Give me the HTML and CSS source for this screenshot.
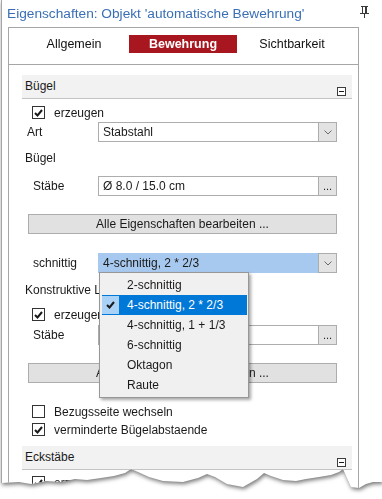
FILE: index.html
```html
<!DOCTYPE html>
<html lang="de">
<head>
<meta charset="utf-8">
<title>Eigenschaften</title>
<link rel="stylesheet" href="styles.css">
</head>
<body>
<div class="stage">
  <div class="window">
    <div class="titlebar">
      <span class="title">Eigenschaften: Objekt 'automatische Bewehrung'</span>
      <svg class="pin" width="9" height="12" viewBox="0 0 9 12">
        <path d="M1 0.5H8M2.5 0.5V7M6.5 0.5V7M0 7.5H9M4.5 8V12" stroke="#3a3a3a" stroke-width="1" fill="none"/>
        <rect x="5" y="1" width="1.5" height="6" fill="#3a3a3a"/>
      </svg>
    </div>
    <div class="panel">
      <div class="tabs">
        <span class="tab">Allgemein</span>
        <span class="tab active">Bewehrung</span>
        <span class="tab">Sichtbarkeit</span>
      </div>
      <div class="content">
        <div class="section-head"><span>Bügel</span><span class="collapse"></span></div>

        <div class="check-row r-erz1">
          <span class="cb checked"><svg width="9" height="8" viewBox="0 0 9 8"><path d="M1 4L3.5 6.5L8 1" stroke="#1a1a1a" stroke-width="2" fill="none"/></svg></span>
          <span class="cb-label">erzeugen</span>
        </div>

        <div class="field-row r-art">
          <span class="label l-art">Art</span>
          <div class="combo">
            <span class="combo-text">Stabstahl</span>
            <span class="combo-btn"><svg width="8" height="5" viewBox="0 0 8 5"><path d="M0.5 0.5L4 4L7.5 0.5" stroke="#6a6a6a" stroke-width="1" fill="none"/></svg></span>
          </div>
        </div>

        <div class="subhead r-sub1">Bügel</div>

        <div class="field-row r-staebe1">
          <span class="label l-in">Stäbe</span>
          <div class="combo">
            <span class="combo-text">Ø 8.0 / 15.0 cm</span>
            <span class="combo-btn dots">...</span>
          </div>
        </div>

        <div class="wide-btn r-btn1">Alle Eigenschaften bearbeiten ...</div>

        <div class="field-row r-schn">
          <span class="label l-in">schnittig</span>
          <div class="combo focused">
            <span class="combo-text">4-schnittig, 2 * 2/3</span>
            <span class="combo-btn"><svg width="8" height="5" viewBox="0 0 8 5"><path d="M0.5 0.5L4 4L7.5 0.5" stroke="#6a6a6a" stroke-width="1" fill="none"/></svg></span>
          </div>
        </div>

        <div class="subhead r-sub2">Konstruktive Längsstäbe</div>

        <div class="check-row r-erz2">
          <span class="cb checked"><svg width="9" height="8" viewBox="0 0 9 8"><path d="M1 4L3.5 6.5L8 1" stroke="#1a1a1a" stroke-width="2" fill="none"/></svg></span>
          <span class="cb-label">erzeugen</span>
        </div>

        <div class="field-row r-staebe2">
          <span class="label l-in">Stäbe</span>
          <div class="combo">
            <span class="combo-text"></span>
            <span class="combo-btn dots">...</span>
          </div>
        </div>

        <div class="wide-btn r-btn2">Alle Eigenschaften bearbeiten ...</div>

        <div class="check-row r-bez">
          <span class="cb"></span>
          <span class="cb-label">Bezugsseite wechseln</span>
        </div>

        <div class="check-row r-verm">
          <span class="cb checked"><svg width="9" height="8" viewBox="0 0 9 8"><path d="M1 4L3.5 6.5L8 1" stroke="#1a1a1a" stroke-width="2" fill="none"/></svg></span>
          <span class="cb-label">verminderte Bügelabstaende</span>
        </div>

        <div class="section-head r-eck"><span>Eckstäbe</span><span class="collapse"></span></div>

        <div class="check-row r-erz3">
          <span class="cb checked"><svg width="9" height="8" viewBox="0 0 9 8"><path d="M1 4L3.5 6.5L8 1" stroke="#1a1a1a" stroke-width="2" fill="none"/></svg></span>
          <span class="cb-label">erzeugen</span>
        </div>
      </div>
    </div>

    <div class="dropdown">
      <div class="item">2-schnittig</div>
      <div class="item selected"><span class="mark"><svg width="9" height="8" viewBox="0 0 9 8"><path d="M1 4L3.5 6.5L8 1" stroke="#1a1a1a" stroke-width="2" fill="none"/></svg></span>4-schnittig, 2 * 2/3</div>
      <div class="item">4-schnittig, 1 + 1/3</div>
      <div class="item">6-schnittig</div>
      <div class="item">Oktagon</div>
      <div class="item">Raute</div>
    </div>
  </div>
</div>
</body>
</html>
```

FILE: styles.css
```css
* { box-sizing: border-box; }

html, body {
  margin: 0;
  padding: 0;
  background: #ffffff;
}

body {
  font-family: "Liberation Sans", Arial, sans-serif;
  font-size: 12px;
  color: #1a1a1a;
}

.stage {
  width: 382px;
  height: 499px;
  filter: drop-shadow(1px 2px 2px rgba(0, 0, 0, 0.55));
}

.window {
  position: relative;
  width: 381px;
  height: 499px;
  background: #ffffff;
  border-left: 1px solid #a6a6a6;
  margin-left: 1px;
  overflow: hidden;
  clip-path: polygon(0 0, 381px 0, 381px 482px, 372px 482px, 365px 484px, 358px 488px, 350px 487px, 346px 478px, 342px 469px, 338px 472px, 330px 475px, 318px 477px, 305px 479px, 295px 481px, 282px 480px, 270px 476px, 263px 473px, 256px 479px, 242px 487px, 226px 484px, 214px 477px, 206px 474px, 197px 478px, 182px 482px, 162px 481px, 148px 477px, 137px 472px, 130px 469px, 124px 473px, 113px 476px, 100px 478px, 86px 480px, 74px 479px, 60px 482px, 45px 481px, 30px 484px, 18px 482px, 0 483px);
}

.titlebar {
  height: 27px;
  display: flex;
  align-items: center;
  padding: 0 0 0 5px;
}

.title {
  font-family: "Liberation Sans", Arial, sans-serif;
  font-size: 13.7px;
  color: #3a6fb5;
  margin-top: -1px;
  flex: none;
}

.pin {
  display: block;
  margin-top: -4px;
  margin-left: auto;
  margin-right: 13px;
  flex: none;
}

.panel {
  margin-left: 6px;
  width: 351px;
  height: 520px;
  border: 1px solid #a6a6a6;
  border-bottom: none;
}

.tabs {
  height: 37px;
  border-bottom: 1px solid #a6a6a6;
  display: grid;
  grid-template-columns: 108px 108px 108px;
  column-gap: 1px;
  padding: 7px 0 0 11px;
  align-items: start;
}

.tab {
  height: 18px;
  line-height: 18px;
  text-align: center;
  color: #111;
  font-size: 12.5px;
}

.tab.active {
  background: #a8171f;
  color: #ffffff;
  font-weight: bold;
}

.content {
  padding: 10px 6px 0 13px;
}

.section-head {
  height: 24px;
  background: #f2f2f2;
  border-bottom: 1px solid #c4c4c4;
  position: relative;
  padding-left: 3px;
  line-height: 23px;
  color: #1a1a1a;
}

.collapse {
  position: absolute;
  right: 6px;
  bottom: 2px;
  width: 9px;
  height: 9px;
  border: 1px solid #3c3c3c;
  background: #ffffff;
}

.collapse::after {
  content: "";
  position: absolute;
  left: 1px;
  right: 1px;
  top: 3px;
  height: 1px;
  background: #1a1a1a;
}

.check-row {
  display: flex;
  align-items: center;
  height: 13px;
  padding-left: 10px;
}

.cb {
  width: 13px;
  height: 13px;
  border: 1px solid #333333;
  background: #ffffff;
  display: flex;
  align-items: center;
  justify-content: center;
  flex: none;
}

.cb svg { display: block; }

.cb-label {
  margin-left: 9px;
  white-space: nowrap;
}

.field-row {
  display: flex;
  align-items: center;
  height: 20px;
}

.label {
  flex: none;
}

.l-art {
  width: 76px;
  padding-left: 5px;
}

.l-in {
  width: 76px;
  padding-left: 11px;
}

.combo {
  width: 239px;
  height: 20px;
  border: 1px solid #adadad;
  background: #ffffff;
  display: flex;
}

.combo.focused {
  background: #a8c9ef;
  border-color: #a8c9ef;
}

.combo-text {
  flex: 1;
  line-height: 18px;
  padding-left: 4px;
  white-space: nowrap;
  overflow: hidden;
}

.combo-btn {
  width: 18px;
  flex: none;
  background: #e3e3e3;
  border-left: 1px solid #adadad;
  display: flex;
  align-items: center;
  justify-content: center;
}

.combo.focused .combo-btn {
  border: 1px solid #adadad;
  margin: -1px -1px -1px 0;
  height: 20px;
  width: 19px;
}

.combo-btn.dots {
  font-size: 11px;
  line-height: 18px;
  align-items: flex-start;
  color: #222;
}

.subhead {
  height: 16px;
  line-height: 16px;
  padding-left: 3px;
  white-space: nowrap;
}

.wide-btn {
  width: 309px;
  height: 20px;
  margin-left: 6px;
  background: #e1e1e1;
  border: 1px solid #adadad;
  text-align: center;
  line-height: 18px;
  color: #1a1a1a;
}

.r-erz1 { margin-top: 7px; }
.r-art { margin-top: 3px; }
.r-sub1 { margin-top: 8px; }
.r-staebe1 { margin-top: 10px; }
.r-btn1 { margin-top: 18px; }
.r-schn { margin-top: 19px; }
.r-sub2 { margin-top: 9px; }
.r-erz2 { margin-top: 10px; }
.r-staebe2 { margin-top: 4px; }
.r-btn2 { margin-top: 18px; }
.r-bez { margin-top: 22px; }
.r-verm { margin-top: 5px; }
.r-eck { margin-top: 10px; }
.r-erz3 { margin-top: 6px; }

.dropdown {
  position: absolute;
  left: 97px;
  top: 272px;
  width: 150px;
  height: 126px;
  background: #f0f0f0;
  border: 1px solid #979797;
  padding: 2px 1px 0 2px;
  box-shadow: 2px 2px 3px rgba(0, 0, 0, 0.35);
}

.item {
  height: 20px;
  line-height: 20px;
  padding-left: 25px;
  position: relative;
  color: #1a1a1a;
  white-space: nowrap;
}

.item.selected {
  background: #0078d7;
  color: #ffffff;
}

.mark {
  position: absolute;
  left: 0;
  top: 1px;
  width: 17px;
  height: 18px;
  background: #a9d2f6;
  display: flex;
  align-items: center;
  justify-content: center;
}
```
